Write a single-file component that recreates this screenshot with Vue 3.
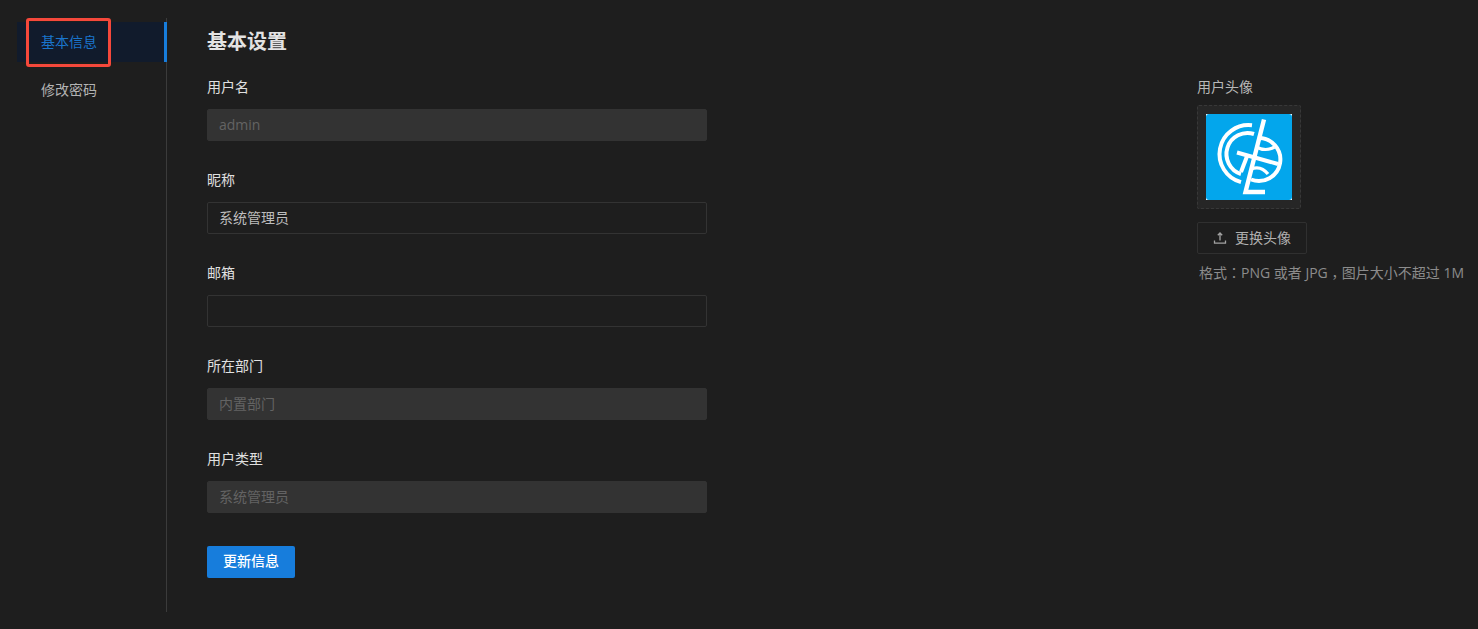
<script setup>
const fields = [
  { label: "用户名", value: "admin", disabled: true },
  { label: "昵称", value: "系统管理员", disabled: false },
  { label: "邮箱", value: "", disabled: false },
  { label: "所在部门", value: "内置部门", disabled: true },
  { label: "用户类型", value: "系统管理员", disabled: true },
];
</script>

<template>
  <div class="page">
    <aside class="side">
      <div class="menu-item active">基本信息</div>
      <div class="menu-item">修改密码</div>
      <div class="marker"></div>
    </aside>

    <main class="content">
      <h1>基本设置</h1>
      <div class="columns">
        <form class="form" @submit.prevent>
          <div v-for="f in fields" :key="f.label" class="field">
            <label>{{ f.label }}</label>
            <input type="text" :value="f.value" :disabled="f.disabled" />
          </div>
          <button type="submit" class="primary"><span>更新信息</span></button>
        </form>

        <div class="avatar">
          <div class="avatar-label">用户头像</div>
          <div class="avatar-box">
            <svg class="logo" width="86" height="86" viewBox="0 0 86 86">
              <rect width="86" height="86" fill="#fff" />
              <rect width="86" height="86" rx="3" fill="#03a6ec" />
              <g fill="none" stroke="#fff" stroke-width="4">
                <path d="M46 11.3A29 29 0 0 0 35 68.1" />
                <path d="M48 20A21 21 0 0 0 35 60" />
                <path d="M52 24A21.5 21.5 0 1 1 45 65.5" />
                <path d="M58 5.5L39.5 78H59" stroke-width="4.4" />
                <path d="M31 38.5L72 50" />
                <path d="M41.5 41L35 58" />
                <path d="M50 33Q60 38 68.5 33" stroke-width="3.2" />
                <path d="M45 55Q55 51 62 60" stroke-width="3.2" />
              </g>
            </svg>
          </div>
          <button type="button" class="upload">
            <svg width="14" height="14" viewBox="0 0 14 14" fill="none" stroke="#a3a3a3" stroke-width="1.3">
              <path d="M7 9.5V2.2M4.8 4.2L7 2l2.2 2.2M1.5 9.5v2.7h11V9.5" />
            </svg>
            <span>更换头像</span>
          </button>
          <p class="hint">格式<span class="punct">：</span>PNG 或者 JPG<span class="punct low">，</span>图片大小不超过 1M</p>
        </div>
      </div>
    </main>

    <div class="annotation"></div>
  </div>
</template>

<style>
html,
body {
  background: #1e1e1e;
}
</style>

<style scoped>
.page {
  position: relative;
  box-sizing: border-box;
  height: 629px;
  display: flex;
  padding: 18px 0 17px 17px;
  background: #1e1e1e;
  font-family: "Open Sans", "Noto Sans CJK SC", sans-serif;
  font-size: 14px;
  color: #d6d6d6;
  overflow: hidden;
}

.side {
  position: relative;
  width: 150px;
  box-sizing: border-box;
  padding-top: 4px;
  border-right: 1px solid #3b3b3b;
}

.menu-item {
  height: 40px;
  line-height: 40px;
  margin-bottom: 8px;
  padding-left: 24px;
  color: #b3b3b3;
}

.menu-item.active {
  background: #111b2c;
  color: #1a75cc;
}

.marker {
  position: absolute;
  top: 4px;
  right: -1px;
  width: 3px;
  height: 40px;
  background: #177ddc;
}

.content {
  flex: 1;
  padding-left: 40px;
}

h1 {
  margin: 9px 0 0;
  font-size: 20px;
  font-weight: 700;
  line-height: 30px;
  color: #e3e3e3;
}

.columns {
  display: flex;
  margin-top: 19px;
}

.form {
  width: 500px;
}

.field {
  margin-bottom: 28px;
}

.field label {
  display: block;
  height: 22px;
  line-height: 22px;
  margin-bottom: 11px;
  color: #e0e0e0;
}

.field input {
  display: block;
  box-sizing: border-box;
  width: 100%;
  height: 32px;
  padding: 0 11px 2px;
  font: inherit;
  color: #bdbdbd;
  background: transparent;
  border: 1px solid #333;
  border-radius: 2px;
  outline: none;
}

.field input:disabled {
  color: #636363;
  background: #333;
  border-color: #333;
}

.primary {
  display: block;
  width: 88px;
  height: 32px;
  margin-top: 33px;
  padding: 0 0 5px;
  font: inherit;
  font-weight: 500;
  color: #fff;
  background: #177ddc;
  border: 0;
  border-radius: 2px;
  cursor: pointer;
}

.avatar {
  margin-left: 490px;
}

.avatar-label {
  height: 22px;
  line-height: 22px;
  color: #b8b8b8;
}

.avatar-box {
  box-sizing: border-box;
  width: 104px;
  height: 104px;
  margin-top: 7px;
  padding: 8px;
  background: #262626;
  border: 1px dashed #383838;
  border-radius: 2px;
}

.logo {
  display: block;
}

.upload {
  display: flex;
  align-items: center;
  justify-content: center;
  gap: 8px;
  box-sizing: border-box;
  width: 110px;
  height: 32px;
  margin-top: 13px;
  padding: 0 0 2px;
  font: inherit;
  color: #b0b0b0;
  background: transparent;
  border: 1px solid #303030;
  border-radius: 2px;
}

.upload svg {
  margin-top: 2px;
}

.hint {
  margin: 8px 0 0 2px;
  line-height: 22px;
  color: #8c8c8c;
  white-space: nowrap;
}

/* centred punctuation, as the traditional-Chinese face draws it */
.punct {
  font-family: "Noto Sans CJK TC", sans-serif;
  line-height: 1;
}

.punct.low {
  vertical-align: -4px;
}

.annotation {
  position: absolute;
  left: 26px;
  top: 18px;
  width: 85px;
  height: 49px;
  box-sizing: border-box;
  border: 3px solid #f5483b;
  border-radius: 3px;
}
</style>
